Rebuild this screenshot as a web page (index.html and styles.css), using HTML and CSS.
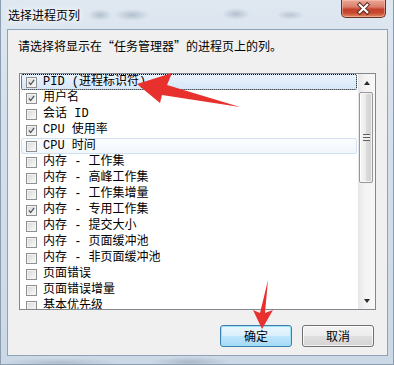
FILE: index.html
```html
<!DOCTYPE html>
<html lang="zh-CN">
<head>
<meta charset="utf-8">
<title>选择进程页列</title>
<link rel="stylesheet" href="styles.css">
</head>
<body>
<div class="window">
  <div class="titlebar">
    <span class="title">选择进程页列</span>
    <div class="close">
      <svg width="45" height="18" viewBox="0 0 45 18">
        <path d="M18.5 5.5 L26.5 13.5 M26.5 5.5 L18.5 13.5" stroke="#5a2a22" stroke-width="4.2" stroke-linecap="square" fill="none"/>
        <path d="M18.5 5.5 L26.5 13.5 M26.5 5.5 L18.5 13.5" stroke="#ffffff" stroke-width="2.2" stroke-linecap="square" fill="none"/>
      </svg>
    </div>
  </div>
  <div class="client">
    <p class="prompt">请选择将显示在“任务管理器”的进程页上的列。</p>
    <div class="listbox">
      <ul class="items">
        <li class="item focused"><span class="cb"><svg viewBox="0 0 11 11"><path d="M2.3 5.3 L4.5 8 L8.7 2.4" /></svg></span><span class="label">PID (进程标识符)</span></li>
        <li class="item"><span class="cb"><svg viewBox="0 0 11 11"><path d="M2.3 5.3 L4.5 8 L8.7 2.4" /></svg></span><span class="label">用户名</span></li>
        <li class="item"><span class="cb"></span><span class="label">会话 ID</span></li>
        <li class="item"><span class="cb"><svg viewBox="0 0 11 11"><path d="M2.3 5.3 L4.5 8 L8.7 2.4" /></svg></span><span class="label">CPU 使用率</span></li>
        <li class="item hover"><span class="cb"></span><span class="label">CPU 时间</span></li>
        <li class="item"><span class="cb"></span><span class="label">内存 - 工作集</span></li>
        <li class="item"><span class="cb"></span><span class="label">内存 - 高峰工作集</span></li>
        <li class="item"><span class="cb"></span><span class="label">内存 - 工作集增量</span></li>
        <li class="item"><span class="cb"><svg viewBox="0 0 11 11"><path d="M2.3 5.3 L4.5 8 L8.7 2.4" /></svg></span><span class="label">内存 - 专用工作集</span></li>
        <li class="item"><span class="cb"></span><span class="label">内存 - 提交大小</span></li>
        <li class="item"><span class="cb"></span><span class="label">内存 - 页面缓冲池</span></li>
        <li class="item"><span class="cb"></span><span class="label">内存 - 非页面缓冲池</span></li>
        <li class="item"><span class="cb"></span><span class="label">页面错误</span></li>
        <li class="item"><span class="cb"></span><span class="label">页面错误增量</span></li>
        <li class="item"><span class="cb"></span><span class="label">基本优先级</span></li>
      </ul>
      <div class="scrollbar">
        <div class="sb-btn"><span class="tri-up"></span></div>
        <div class="sb-track">
          <div class="thumb"><span class="grip"></span></div>
        </div>
        <div class="sb-btn"><span class="tri-down"></span></div>
      </div>
    </div>
    <div class="buttons">
      <button class="btn default">确定</button>
      <button class="btn">取消</button>
    </div>
  </div>
  <svg class="annot" width="394" height="365" viewBox="0 0 394 365">
    <polygon points="137,84 172,73 167,85 240,107 162,95 160,103" fill="#e8302d"/>
    <polygon points="262,329 253,310 260,313 268,280 265,313 273,310" fill="#e8302d"/>
  </svg>
</div>
</body>
</html>
```

FILE: styles.css
```css
* { box-sizing: border-box; }
html, body { margin: 0; padding: 0; }
body {
  width: 394px;
  height: 365px;
  overflow: hidden;
  font-family: "Noto Sans CJK SC", "Noto Sans", sans-serif;
  font-size: 12px;
  color: #000;
  background: #cfdcea;
}
.window {
  position: relative;
  width: 394px;
  height: 365px;
  display: flex;
  flex-direction: column;
  padding: 0 6px 9px 7px;
  background:
    radial-gradient(ellipse 12px 6px at 100px 15px, rgba(100,120,145,0.35), transparent),
    radial-gradient(ellipse 18px 6px at 132px 15px, rgba(100,120,145,0.35), transparent),
    radial-gradient(ellipse 14px 6px at 236px 14px, rgba(100,120,145,0.35), transparent),
    radial-gradient(ellipse 14px 5px at 290px 15px, rgba(100,120,145,0.3), transparent),
    radial-gradient(ellipse 40px 5px at 190px 362px, rgba(90,110,135,0.3), transparent),
    radial-gradient(ellipse 60px 5px at 60px 363px, rgba(90,110,135,0.25), transparent),
    linear-gradient(to bottom, #dfe8f1 0%, #d5e0ec 30%, #cbd8e6 100%);
  box-shadow: inset 1px 0 0 #8d9db0, inset -1px 0 0 #8d9db0, inset 0 -1px 0 #8d9db0;
}
.titlebar {
  height: 29px;
  display: flex;
  justify-content: space-between;
  align-items: flex-start;
}
.title {
  margin-top: 7px;
  padding-left: 1px;
  line-height: 16px;
  color: #000;
  text-shadow: 0 0 5px #fff, 0 0 8px #fff;
}
.close {
  width: 45px;
  height: 18px;
  margin-right: 2px;
  border: 1px solid #6b2f25;
  border-top: none;
  border-radius: 0 0 5px 5px;
  background: linear-gradient(to bottom, #e9a899 0%, #dc7f6c 40%, #c3412d 55%, #c8472f 75%, #e08a63 100%);
  box-shadow: inset 0 0 0 1px rgba(255,210,190,0.45);
  display: flex;
  align-items: center;
  justify-content: center;
}
.close svg { display: block; margin-top: -1px; }
.client {
  flex: 1;
  display: flex;
  flex-direction: column;
  border: 1px solid #8fa3b8;
  background: #f0f0f0;
  padding: 0 11px;
}
.prompt {
  margin: 8px 0 0 -1px;
  line-height: 16px;
  white-space: nowrap;
}
.listbox {
  margin-top: 19px;
  height: 237px;
  display: flex;
  border: 1px solid #828790;
  background: #fff;
}
.items {
  flex: 1;
  margin: 0;
  padding: 0;
  list-style: none;
  overflow: hidden;
  font-family: "Liberation Mono", "Noto Sans CJK SC", monospace;
  font-size: 12px;
}
.item {
  height: 16px;
  margin: 0 1px;
  display: flex;
  align-items: center;
  padding-left: 4px;
  border: 1px solid transparent;
  border-radius: 2px;
  white-space: nowrap;
}
.item.focused {
  border: 1px dotted #000;
  background: linear-gradient(to bottom, #eaf3fc, #d6e7f9);
}
.item.hover {
  border-color: #d2e1f1;
  background: linear-gradient(to bottom, #fbfdff, #f1f6fc);
}
.cb {
  width: 11px;
  height: 11px;
  margin-right: 6px;
  flex: none;
  border: 1px solid #8e8f8f;
  background: linear-gradient(135deg, #d6d6d6 0%, #ebebeb 55%, #fbfbfb 100%);
  box-shadow: inset 0 0 0 1px #f4f4f4;
}
.cb svg { display: block; width: 9px; height: 9px; }
.cb svg path { fill: none; stroke: #4a5466; stroke-width: 1.6; }
.label { line-height: 14px; }
.scrollbar {
  width: 17px;
  flex: none;
  display: flex;
  flex-direction: column;
  background: linear-gradient(to right, #e6e6e6, #f3f3f3 40%, #f8f8f8);
}
.sb-btn {
  height: 17px;
  display: flex;
  align-items: center;
  justify-content: center;
}
.tri-up {
  width: 0; height: 0;
  border-left: 3.5px solid transparent;
  border-right: 3.5px solid transparent;
  border-bottom: 4px solid #2a2a2a;
}
.tri-down {
  width: 0; height: 0;
  border-left: 3.5px solid transparent;
  border-right: 3.5px solid transparent;
  border-top: 4px solid #2a2a2a;
}
.sb-track { flex: 1; }
.thumb {
  width: 14px;
  height: 91px;
  margin: 1px 0 0 1px;
  border: 1px solid #979797;
  border-radius: 2px;
  background: linear-gradient(to right, #f6f6f6 0%, #ececec 45%, #dadada 55%, #d2d2d2 100%);
  box-shadow: inset 0 0 0 1px rgba(255,255,255,0.7);
  display: flex;
  align-items: center;
  justify-content: center;
}
.grip {
  width: 7px;
  height: 7px;
  background: repeating-linear-gradient(to bottom, #606060 0 1px, #f0f0f0 1px 3px);
}
.buttons {
  margin-top: 15px;
  margin-right: 2px;
  display: flex;
  justify-content: flex-end;
  gap: 10px;
}
.btn {
  width: 72px;
  height: 22px;
  padding: 0;
  font-family: "Noto Sans CJK SC", sans-serif;
  font-size: 12px;
  line-height: 20px;
  color: #000;
  border: 1px solid #707070;
  border-radius: 3px;
  background: linear-gradient(to bottom, #f4f4f4 0%, #ececec 48%, #dfdfdf 52%, #d4d4d4 100%);
  box-shadow: inset 0 0 0 1px rgba(255,255,255,0.75);
}
.btn.default {
  border-color: #3c7fb1;
  background: linear-gradient(to bottom, #eaf6fd 0%, #d9f0fc 48%, #bee6fd 52%, #a7d9f5 100%);
  box-shadow: inset 0 0 0 1px #9ee0f6;
}
.annot {
  position: absolute;
  top: 0;
  left: 0;
  pointer-events: none;
}
```
